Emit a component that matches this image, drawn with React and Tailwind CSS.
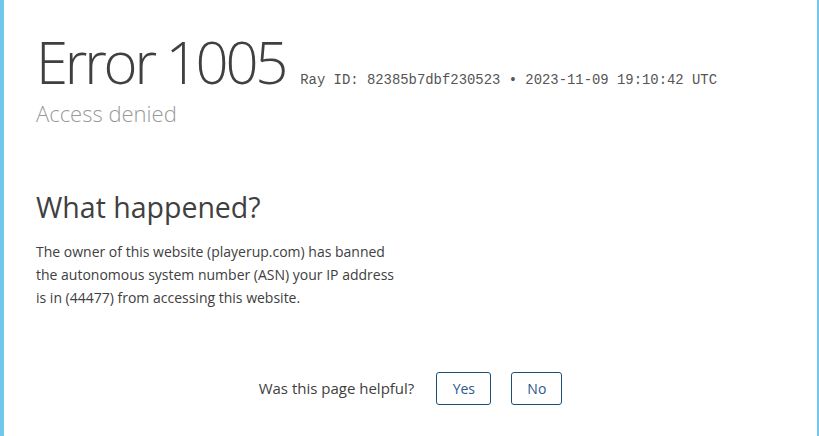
import React from 'react';

const App = () => {
  return (
    <div className="h-[436px] w-[819px] overflow-hidden bg-white border-l-4 border-r-2 border-[#72c8ec] font-['Open_Sans',sans-serif] text-[#404040]">
      {/* Header */}
      <div className="pl-[32px] pt-[32px]">
        <div className="flex items-baseline">
          <h1 className="text-[58px] font-light leading-[60px] tracking-[-3.2px] text-[#404040]">Error 1005</h1>
          <span className="ml-[15px] font-['Liberation_Mono',monospace] text-[13.9px] text-[#555]">
            Ray ID: 82385b7dbf230523 • 2023-11-09 19:10:42 UTC
          </span>
        </div>
        <h2 className="mt-[7px] text-[22px] font-light leading-[28px] text-[#999]">Access denied</h2>
      </div>

      {/* What happened */}
      <div className="pl-[32px] pt-[60px]">
        <h2 className="text-[28.5px] font-normal leading-[40px] text-[#404040]">What happened?</h2>
        <p className="mt-[13px] w-[368px] text-[14px] leading-[23px] text-[#404040]">
          The owner of this website (playerup.com) has banned the autonomous system number (ASN) your IP address is in (44477) from accessing this website.
        </p>
      </div>

      {/* Feedback */}
      <div className="mt-[63px] flex items-center justify-center gap-[20px]">
        <span className="mr-[2px] text-[15px] text-[#404040]">Was this page helpful?</span>
        <button className="h-[33px] w-[55px] rounded-[3px] border border-[#1f4d7a] text-[14px] text-[#2a5a8c]">Yes</button>
        <button className="h-[33px] w-[51px] rounded-[3px] border border-[#1f4d7a] text-[14px] text-[#2a5a8c]">No</button>
      </div>
    </div>
  );
};

export default App;
